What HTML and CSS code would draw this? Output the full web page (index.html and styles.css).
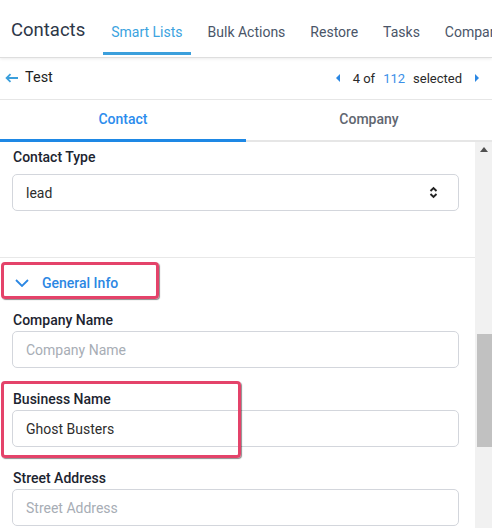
FILE: index.html
```
<!DOCTYPE html>
<html lang="en">
<head>
    <meta charset="UTF-8">
    <meta name="viewport" content="width=device-width, initial-scale=1.0">
    <title>Contacts</title>
    <link rel="stylesheet" href="styles.css">
</head>
<body>
    <!-- Top navigation -->
    <nav class="top-nav">
        <div class="brand">Contacts</div>
        <a class="nav-tab active">Smart Lists</a>
        <a class="nav-tab">Bulk Actions</a>
        <a class="nav-tab">Restore</a>
        <a class="nav-tab">Tasks</a>
        <a class="nav-tab">Companies</a>
    </nav>

    <!-- Back link and record pager -->
    <div class="record-bar">
        <div class="back-link">
            <svg width="14" height="10" viewBox="0 0 14 10"><path d="M13 5H2M5.5 1.2L1.6 5l3.9 3.8" fill="none" stroke="#3b9fdc" stroke-width="1.8"/></svg>
            <span>Test</span>
        </div>
        <div class="pager">
            <span class="caret left"></span>
            <span>4 of</span>
            <span class="total">112</span>
            <span>selected</span>
            <span class="caret right"></span>
        </div>
    </div>

    <!-- Contact / Company switch -->
    <div class="record-tabs">
        <div class="record-tab active">Contact</div>
        <div class="record-tab">Company</div>
    </div>

    <div class="scroll-area">
        <div class="pane">
            <section class="section first">
                <div class="field">
                    <label class="field-label type-label">Contact Type</label>
                    <div class="select-box">
                        <span>lead</span>
                        <svg width="9" height="13" viewBox="0 0 9 13"><path d="M1.5 5L4.5 2l3 3M1.5 8l3 3 3-3" fill="none" stroke="#222" stroke-width="1.9"/></svg>
                    </div>
                </div>
            </section>

            <section class="section">
                <div class="section-header">
                    <svg width="14" height="8" viewBox="0 0 14 8"><path d="M1 1l6 6 6-6" fill="none" stroke="#2b87e3" stroke-width="1.8"/></svg>
                    <span>General Info</span>
                    <div class="highlight header-mark"></div>
                </div>

                <div class="field">
                    <label class="field-label">Company Name</label>
                    <input class="text-input" type="text" placeholder="Company Name">
                </div>

                <div class="field">
                    <label class="field-label">Business Name</label>
                    <input class="text-input" type="text" value="Ghost Busters">
                    <div class="highlight field-mark"></div>
                </div>

                <div class="field">
                    <label class="field-label">Street Address</label>
                    <input class="text-input" type="text" placeholder="Street Address">
                </div>
            </section>
        </div>

        <div class="scrollbar">
            <span class="scroll-up"></span>
            <div class="scroll-thumb"></div>
        </div>
    </div>
</body>
</html>
```

FILE: styles.css
```
body {
    font-family: Roboto, "Liberation Sans", Arial, sans-serif;
    margin: 0;
    padding: 0;
    background-color: #ffffff;
    color: #222222;
    width: 492px;
    height: 528px;
    overflow: hidden;
}

/* Top navigation */
.top-nav {
    display: flex;
    height: 57px;
    border-bottom: 1px solid #dedede;
    box-shadow: 0 1px 3px rgba(0, 0, 0, 0.08);
    white-space: nowrap;
    overflow: hidden;
    position: relative;
    z-index: 1;
}

.brand {
    font-size: 18.5px;
    line-height: 24px;
    padding: 18px 0 0 11px;
    margin-right: 18px;
    color: #2d3748;
}

.nav-tab {
    font-size: 14px;
    line-height: 20px;
    padding: 22px 8px 10px;
    margin-right: 9px;
    height: 20px;
    color: #4a5568;
    border-bottom: 3px solid transparent;
}

.nav-tab.active {
    color: #3ba3e0;
    border-bottom-color: #3b9fdc;
}

/* Back link and pager */
.record-bar {
    display: flex;
    justify-content: space-between;
    align-items: center;
    height: 41px;
    border-bottom: 1px solid #e6e6e6;
}

.back-link {
    display: flex;
    align-items: center;
    gap: 6px;
    padding: 0 0 2px 5px;
    font-size: 14.5px;
    color: #1f1f1f;
}

.pager {
    display: flex;
    align-items: center;
    gap: 8px;
    padding: 0 13px 1px 0;
    font-size: 13px;
    color: #2a2a2a;
}

.pager .total {
    color: #3b8fe8;
}

.caret {
    width: 0;
    height: 0;
    border-top: 4px solid transparent;
    border-bottom: 4px solid transparent;
}

.caret.left {
    border-right: 4px solid #2b87e3;
    margin-right: 5px;
}

.caret.right {
    border-left: 4px solid #2b87e3;
    margin-left: 5px;
}

/* Contact / Company switch */
.record-tabs {
    display: flex;
    height: 42px;
    box-shadow: inset 0 -2px 0 #e6e6e6;
}

.record-tab {
    flex: 1;
    text-align: center;
    font-size: 14px;
    font-weight: 500;
    line-height: 20px;
    padding-top: 9px;
    color: #5f6670;
}

.record-tab.active {
    color: #2b8ced;
    border-bottom: 3px solid #1e88e5;
    height: 30px;
}

/* Scrolling form */
.scroll-area {
    display: flex;
    height: 386px;
    overflow: hidden;
}

.pane {
    flex: 1;
}

.section {
    padding: 0 16px 0 12px;
    border-top: 1px solid #e8e8e8;
}

.section.first {
    border-top: none;
    padding-top: 5px;
    padding-bottom: 25px;
}

.section-header {
    position: relative;
    display: flex;
    align-items: center;
    gap: 13px;
    padding: 14px 0 16px 3px;
    line-height: 22px;
    font-size: 14px;
    font-weight: 500;
    color: #2b87e3;
}

.field {
    position: relative;
    margin-bottom: 21px;
}

.field-label {
    display: block;
    font-size: 14px;
    font-weight: 500;
    line-height: 21px;
    color: #1c2430;
    padding-left: 1px;
}

.type-label {
    margin-bottom: 6px;
}

.select-box,
.text-input {
    display: flex;
    justify-content: space-between;
    align-items: center;
    box-sizing: border-box;
    width: 100%;
    height: 37px;
    padding: 0 20px 0 13px;
    border: 1px solid #d3d6dc;
    border-radius: 5px;
    font-family: inherit;
    font-size: 14px;
    color: #2d2d2d;
    background-color: #ffffff;
}

.text-input::placeholder {
    color: #a7adb5;
}

/* Red marker boxes */
.highlight {
    position: absolute;
    left: -11px;
    box-sizing: border-box;
    border: 3px solid #e4436a;
    border-radius: 4px;
    box-shadow: 1px 1px 1px rgba(0, 0, 0, 0.45);
}

.header-mark {
    top: 4px;
    width: 158px;
    height: 37px;
}

.field-mark {
    top: -8px;
    width: 240px;
    height: 77px;
}

/* Scrollbar */
.scrollbar {
    position: relative;
    width: 17px;
    background-color: #f1f1f1;
}

.scroll-up {
    position: absolute;
    top: 5px;
    left: 5px;
    width: 0;
    height: 0;
    border-left: 4px solid transparent;
    border-right: 4px solid transparent;
    border-bottom: 5px solid #505050;
}

.scroll-thumb {
    position: absolute;
    top: 192px;
    left: 2px;
    right: 0;
    height: 113px;
    background-color: #c1c1c1;
}
```
